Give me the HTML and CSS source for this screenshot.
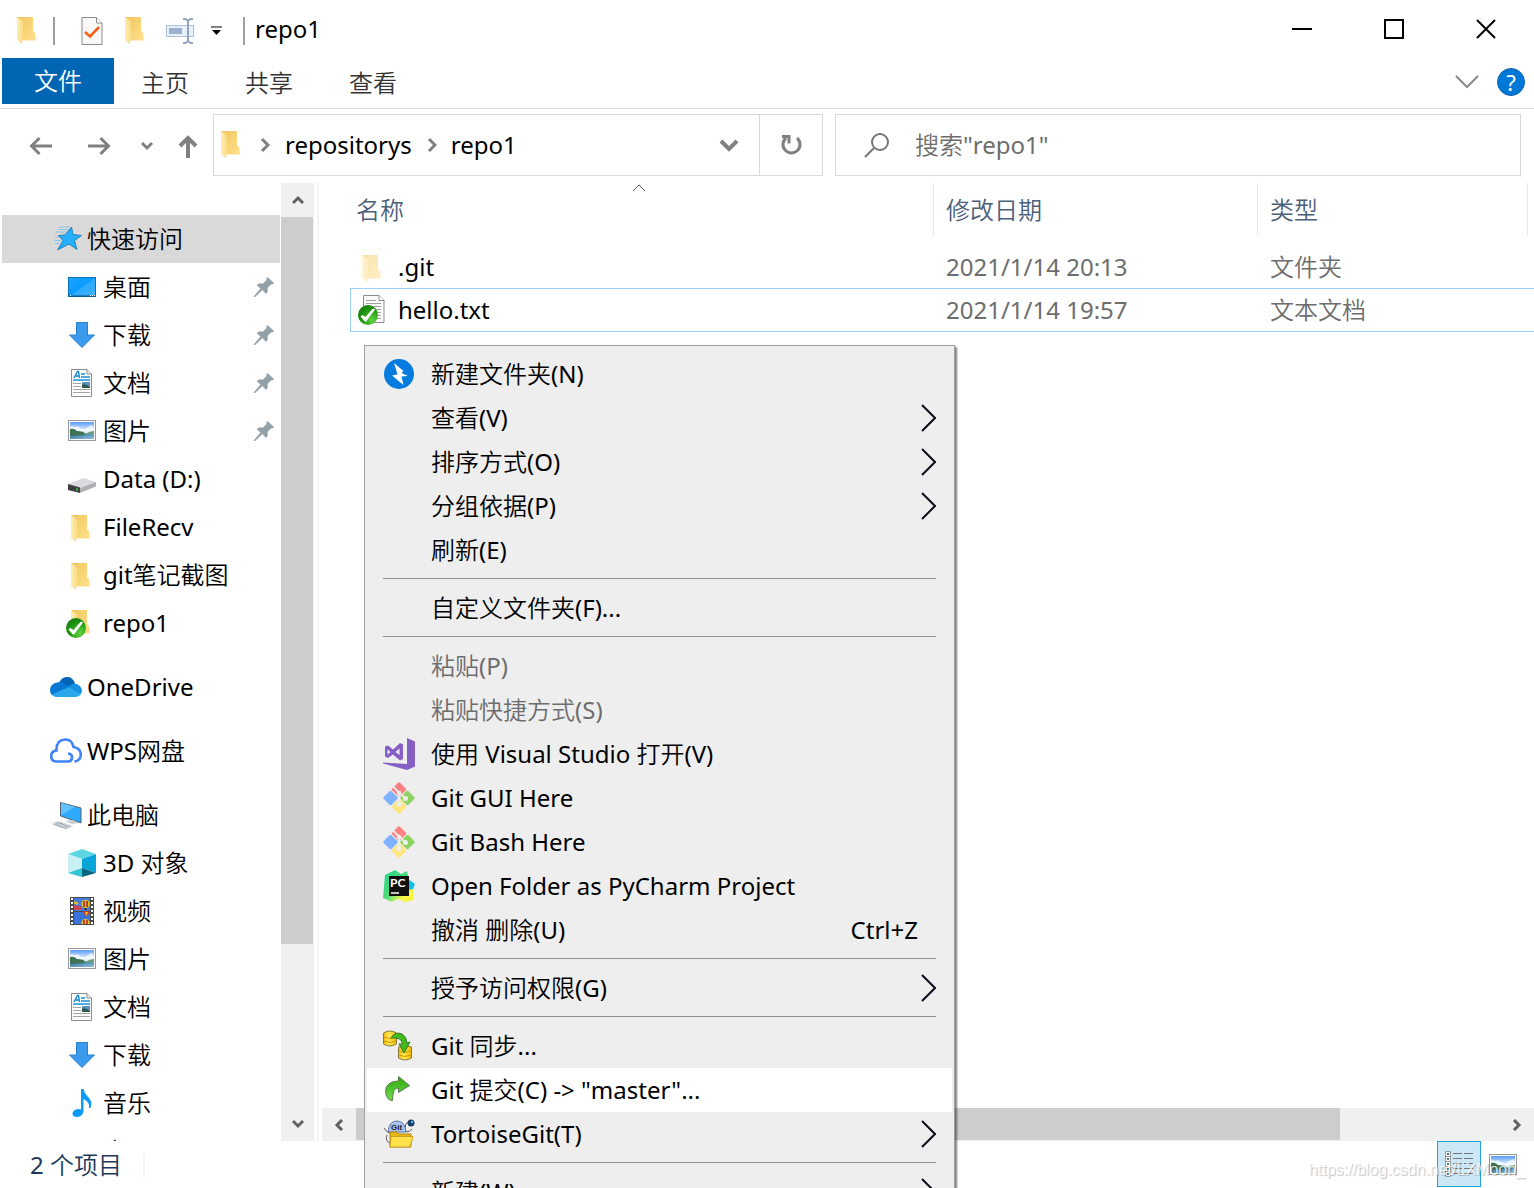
FILE: index.html
```html
<!DOCTYPE html>
<html lang="zh-CN">
<head>
<meta charset="utf-8">
<title>repo1</title>
<link rel="stylesheet" href="styles.css">
</head>
<body>
<svg class="sprite" aria-hidden="true">
  <defs>
    <linearGradient id="g-back" x1="0" x2="1" y1="0" y2="1"><stop offset="0" stop-color="#efc75c"/><stop offset="1" stop-color="#ffe08c"/></linearGradient>
    <linearGradient id="g-flap" x1="0" x2="1"><stop offset="0" stop-color="#ffedb0"/><stop offset="1" stop-color="#fbdb84"/></linearGradient>
    <linearGradient id="g-sky" x1="0" x2="0" y1="0" y2="1"><stop offset="0" stop-color="#5b9bf5"/><stop offset=".5" stop-color="#e4f3fb"/><stop offset="1" stop-color="#bfe0ee"/></linearGradient>
    <linearGradient id="g-sea" x1="0" x2="1" y1="0" y2="1"><stop offset="0" stop-color="#2c6a8f"/><stop offset="1" stop-color="#8fc4dd"/></linearGradient>
    <linearGradient id="g-desk" x1="0" x2="1" y1="0" y2="1"><stop offset="0" stop-color="#1ba4ff"/><stop offset=".5" stop-color="#0a9bff"/><stop offset=".51" stop-color="#2aa9ff"/><stop offset="1" stop-color="#42b5ff"/></linearGradient>
    <linearGradient id="g-green" x1="0" x2="0" y1="0" y2="1"><stop offset="0" stop-color="#2fa80f"/><stop offset="1" stop-color="#6fdc4a"/></linearGradient>
    <radialGradient id="g-ok" cx=".7" cy=".75" r=".9"><stop offset="0" stop-color="#5fd43a"/><stop offset=".6" stop-color="#1f9413"/><stop offset="1" stop-color="#157a0c"/></radialGradient>
    <linearGradient id="g-yel" x1="0" x2="1"><stop offset="0" stop-color="#f2b90a"/><stop offset=".4" stop-color="#ffe95a"/><stop offset="1" stop-color="#efb800"/></linearGradient>
    <linearGradient id="g-pyc" x1="0" x2="1" y1="0" y2="1"><stop offset="0" stop-color="#21d789"/><stop offset=".5" stop-color="#4fdc7c"/><stop offset=".75" stop-color="#fcf84a"/><stop offset="1" stop-color="#f4f032"/></linearGradient>
  </defs>
  <symbol id="folder" viewBox="0 0 19 28">
    <path d="M0 0H16V14L18 16L19 23.500H5Z" fill="url(#g-back)"/>
    <path d="M0 0L6 4.500V22L5 23.500V27.500L0 23Z" fill="url(#g-flap)"/>
  </symbol>
  <symbol id="ok" viewBox="0 0 20 20">
    <circle cx="10" cy="10" r="10" fill="url(#g-ok)"/>
    <path d="M3 11.500L7.500 16.500L16.500 4.500L15 4L7.500 12.500L4.500 10.500Z" fill="#fff" stroke="#fff"/>
  </symbol>
  <symbol id="folder-ok" viewBox="0 0 32 32">
    <use href="#folder" x="5" y="3" width="19" height="28"/><use href="#ok" x="0" y="11" width="20" height="20"/>
  </symbol>
  <symbol id="text-ok" viewBox="0 0 32 32">
    <path d="M6.500 1.500H22L27 6.500V28.500H6.500Z" fill="#fafafa" stroke="#8d8d8d"/><path d="M22 1.500V6.500H27" fill="#fff" stroke="#8d8d8d"/>
    <path d="M9 6.500H19M9 9.500H24M9 12.500H24M9 15.500H24M9 18.500H24M9 21.500H24M9 24.500H24" stroke="#a2a2a2" fill="none"/>
    <use href="#ok" x="1" y="11" width="20" height="20"/>
  </symbol>
  <symbol id="star" viewBox="0 0 32 32">
    <path d="M9 4H20M8 6.500H18M6 9H16M5 14H12M4 17.500H11M5 20.500H9" stroke="#8ac4e8" fill="none"/>
    <path d="M21.500 4L23 11.500L31.500 12.500L24.500 17.500L27 26.500L19 21L7.500 27L13 17.500L8.500 12.500L15 12Z" fill="#27aefc" stroke="#2183bd"/>
  </symbol>
  <symbol id="desktop" viewBox="0 0 32 32">
    <rect x="2.500" y="6.500" width="27" height="19" fill="url(#g-desk)" stroke="#0a6fb5"/><path d="M3 25H29" stroke="#06517f"/><path d="M24 24.500h5M4 24.500h1" stroke="#fff" stroke-dasharray="1 1"/>
  </symbol>
  <symbol id="down" viewBox="0 0 32 32"><path d="M10.500 3.500H21.500V16H28.500L16 28.500L3.500 16H10.500Z" fill="#3b9aec" stroke="#2a7fcb"/></symbol>
  <symbol id="doc" viewBox="0 0 32 32">
    <path d="M5.500 2.500H21L25.500 7V29.500H5.500Z" fill="#fff" stroke="#8d8d8d"/><path d="M21 2.500V7H25.500" fill="#eee" stroke="#8d8d8d"/>
    <path d="M8 11L11.500 4.500H12.500L13.500 11M9.500 9H13" stroke="#1787d0" fill="none" stroke-width="1.400"/><path d="M15 7H19M15 10H24M7 13H24" stroke="#1b8fd8" stroke-width="1.300"/>
    <path d="M7 16.500H15M7 19.500H15M7 22.500H24M7 25.500H24" stroke="#a3a3a3"/>
    <rect x="16" y="15" width="8" height="6" fill="#5f90b5"/><path d="M16 18Q19 16 24 20V21H16Z" fill="#2c5a50"/>
  </symbol>
  <symbol id="picture" viewBox="0 0 28 21">
    <rect x=".5" y=".5" width="27" height="20" fill="#fff" stroke="#999"/><rect x="2" y="2" width="24" height="17" fill="url(#g-sky)"/>
    <path d="M2 7Q3 5 6 7Q9 5 12 8T20 7T26 8V11H2Z" fill="#fff" opacity=".7"/>
    <path d="M2 14H26V19H2Z" fill="url(#g-sea)"/><path d="M2 9Q6 8 9 11Q15 11 18 14Q12 16 2 15.500Z" fill="#3f7250"/><path d="M17 14Q22 11 26 11V14Z" fill="#719b7d"/>
  </symbol>
  <symbol id="picture-row" viewBox="0 0 32 32"><use href="#picture" x="2" y="5" width="28" height="21"/></symbol>
  <symbol id="drive" viewBox="0 0 32 32">
    <path d="M2 21L18 15L30 19L14 25Z" fill="#d9dadd"/><path d="M14 25L30 19V23.500L14 30Z" fill="#aeb0b4"/><path d="M2 21L14 24.500V30L2 27Z" fill="#3e3f41"/><path d="M11 25.500V27.500" stroke="#38c838" stroke-width="2"/>
  </symbol>
  <symbol id="folder-row" viewBox="0 0 32 32"><use href="#folder" x="5" y="4" width="19" height="28"/></symbol>
  <symbol id="onedrive" viewBox="0 0 32 32">
    <path d="M9 12Q12 5 18 6Q23 6.500 25 12.500L18 17Z" fill="#0364b8"/><path d="M6.500 25.500Q0 25 0 19Q0 13 7 11.500Q11 10 15 13L22 18L8 25.500Z" fill="#0878d4"/>
    <path d="M18 16Q22 11 26.500 13Q32 15 32 20.500L30 24L18 17Z" fill="#1490df"/><path d="M2 23.500L19 16L31 23Q29 26 26 26H7Q4 26 2 23.500Z" fill="#28a8ea"/>
  </symbol>
  <symbol id="wps" viewBox="0 0 32 32">
    <path d="M18 18.500Q22.500 19 22 23Q21.500 26.500 18 26.500H6Q1 26 1.200 20.500Q1.500 16 6.500 15.500Q6 5 15 4.500Q22 4.200 23.500 12Q31 13.500 30.800 20Q30.500 25.500 24.500 26.500" fill="none" stroke="#3f83f8" stroke-width="2.600"/>
  </symbol>
  <symbol id="pc" viewBox="0 0 32 32">
    <path d="M10.500 3.500L31 9V24L10.500 17Z" fill="#2eaaff" stroke="#55636e"/><path d="M11 4L25 8L11 16Z" fill="#62c3ff"/>
    <path d="M15 22L23 21L29 24L22 25Z" fill="#c7cdd1"/><path d="M1 25L8 22L24 27L16 30.500Z" fill="#d9dde0"/><path d="M4 25.500L17 29.500M7 23.500L20 28M5 23.500L12 28.500M10 23L17 28" stroke="#a5abb0"/>
  </symbol>
  <symbol id="cube" viewBox="0 0 32 32">
    <path d="M16 2L30 7L16 12L2 7Z" fill="#5fd6e3"/><path d="M2 7L16 12V21L2 26Z" fill="#c9f0f2"/><path d="M30 7L16 12V21L30 26Z" fill="#0aa5d8"/><path d="M2 26L16 21V30Z" fill="#33c4d6"/><path d="M30 26L16 21V30Z" fill="#08647f"/>
  </symbol>
  <symbol id="video" viewBox="0 0 32 32">
    <rect x="4" y="2" width="24" height="28" fill="#4b4b4b"/><path d="M6 3V30M26 3V30" stroke="#fff" stroke-width="2" stroke-dasharray="2 2"/>
    <rect x="8" y="3" width="16" height="13" fill="#4a7cd8"/><rect x="8" y="17" width="16" height="12" fill="#3b73dc"/>
    <path d="M8 10L12 11L16 12V15H8Z" fill="#c64a4d"/><path d="M8 7L12 9" stroke="#f3c716" stroke-width="2"/><circle cx="19.500" cy="9" r="4" fill="#f3c716"/><path d="M18 6V12M21 6V12" stroke="#8b1f25" stroke-width="1.500"/><path d="M18.500 13H20.500V15H18.500Z" fill="#301818"/>
    <path d="M16.500 17Q20 15.500 24 17L20.500 21.500Z" fill="#d93a25"/><path d="M19 17L20.500 21L22 17Z" fill="#f0c42a"/><path d="M15 29Q16 24 19.500 24T24 29Z" fill="#f3c716"/><path d="M18 25V29M21 25V29" stroke="#b92026" stroke-width="1.500"/>
  </symbol>
  <symbol id="music" viewBox="0 0 32 32"><path d="M15 2H17.500Q18 6 22 10Q27 14 24.500 21H23Q24 15 17.500 12V24Q17 29.500 11 30Q6.500 30 6.500 26.500Q7 22.500 12 22L15 22.500Z" fill="#0a9bfa"/></symbol>
  <symbol id="pin" viewBox="0 0 20 20"><path d="M13.500 0L20 6L18.500 7.500H17L13.500 11Q14.500 14.500 12 17L8.500 13L1 20H0V19L6.500 11.500L2.500 8Q5 5.500 9 6.500L12.500 3V1Z" fill="#95a1a8"/></symbol>
  <symbol id="go" viewBox="0 0 16 28"><path d="M2 1L15 14L2 27" fill="none" stroke="#0b0b18" stroke-width="2"/></symbol>
  <symbol id="bolt" viewBox="0 0 32 32"><circle cx="16" cy="16" r="15" fill="#047bde"/><path d="M11 5L20.500 13L18.500 15L25 18L18.500 18.500L20.500 27L9 17.500L14.500 16.500Z" fill="#fff"/></symbol>
  <symbol id="vs" viewBox="0 0 32 32"><path d="M24 0L32 3.500V28.500L24 32L0 25.500V24.500L24 26Z" fill="#865fc5"/><path fill-rule="evenodd" fill="#865fc5" d="M2 8.500L5 7.500L10 11.500L17 5L20 6.500V21L17 22.500L10 16.500L5 20L2 18.500ZM4.500 11.500V16.500L7.500 14ZM16.500 10.500V17L12.500 14Z"/></symbol>
  <symbol id="git" viewBox="0 0 32 32">
    <g transform="rotate(45 16 16)"><rect x="4.500" y="4.500" width="11" height="11" rx="1.500" fill="#ff8080"/><rect x="16.500" y="4.500" width="11" height="11" rx="1.500" fill="#8dd35f"/><rect x="4.500" y="16.500" width="11" height="11" rx="1.500" fill="#80b3ff"/><rect x="16.500" y="16.500" width="11" height="11" rx="1.500" fill="#ffe680"/></g>
    <path d="M10.500 5L16 10.500V22M16 10.500L22 16" fill="none" stroke="#eee" stroke-width="1.800"/><circle cx="16" cy="11" r="2.300" fill="#eee"/><circle cx="22.500" cy="16.500" r="2.500" fill="#eee"/><circle cx="16" cy="22.500" r="2.500" fill="#eee"/>
  </symbol>
  <symbol id="sync" viewBox="0 0 32 32">
    <path d="M.5 3Q7 -1 13.500 3V14Q7 18 .5 14Z" fill="url(#g-yel)" stroke="#8a7a3c"/><path d="M15.500 17Q22 14 28.500 17V28Q22 32 15.500 28Z" fill="url(#g-yel)" stroke="#8a7a3c"/><path d="M1 7Q7 10 13 7M1 11Q7 14 13 11M16 21Q22 24 28 21M16 25Q22 28 28 25" fill="none" stroke="#d49a00"/>
    <path d="M8 8Q12 1 19 4Q24 7 23.500 13L27 12L21 23L16 14L19.500 14Q19 7 8 8Z" fill="#44bb1c" stroke="#317c24"/>
  </symbol>
  <symbol id="commit" viewBox="0 0 32 32"><path d="M15.500 2.500L26.500 11.500L15.500 18.500V14Q9.500 13 9.500 26.500L6.500 26Q1.500 22 3 14Q6 7 15.500 7Z" fill="url(#g-green)" stroke="#5b7c50"/></symbol>
  <symbol id="sheet-check" viewBox="0 0 21 28"><path d="M.5 .5H15L20.500 6V27.500H.5Z" fill="#f8f8f8" stroke="#8b8b8b"/><path d="M15 .5V6H20.500" fill="#fff" stroke="#8b8b8b"/><path d="M3.500 15L8.500 19.500L17.500 10" fill="none" stroke="#f4611a" stroke-width="2.600"/></symbol>
  <symbol id="rename" viewBox="0 0 28 26"><rect x=".5" y="7.500" width="27" height="11" fill="#e6f0fb" stroke="#adbfd9"/><rect x="3" y="10" width="13" height="6" fill="#9cb0cf"/><path d="M17 1H19.500L22 3L24.500 1H27M17 25H19.500L22 23L24.500 25H27M22 3V23" fill="none" stroke="#93a5c4" stroke-width="2"/></symbol>
  <symbol id="view-list" viewBox="0 0 28 26"><path d="M.5 .5H5.500V25.500H.5ZM1 5.500H5M1 10.500H5M1 15.500H5M1 20.500H5" fill="#fff" stroke="#999"/><path d="M3 2V24" stroke="#447788" stroke-width="2" stroke-dasharray="2 3"/><path d="M8 2.500H17M19 2.500H28M8 7.500H17M19 7.500H28M8 12.500H17M19 12.500H28M8 17.500H17M19 17.500H28M8 22.500H17M19 22.500H28" stroke="#777"/></symbol>
</svg>

<header class="titlebar">
  <div class="quick-bar">
    <svg class="folder-icon"><use href="#folder"/></svg>
    <span class="bar"></span>
    <button class="quick" aria-label="属性"><svg width="22" height="28"><use href="#sheet-check"/></svg></button>
    <button class="quick" aria-label="新建文件夹"><svg class="folder-icon"><use href="#folder"/></svg></button>
    <button class="quick" aria-label="重命名"><svg width="28" height="26"><use href="#rename"/></svg></button>
    <button class="quick more" aria-label="自定义快速访问工具栏"><svg width="11" height="10" viewBox="0 0 11 10"><path d="M0 1H11" stroke="#000" stroke-width="1"/><path d="M1 4H10L5.500 9Z"/></svg></button>
    <span class="bar"></span>
  </div>
  <h1 class="title">repo1</h1>
  <div class="window-buttons">
    <button aria-label="最小化"><svg width="20" height="20" viewBox="0 0 20 20"><path d="M0 10H20" stroke="#000" stroke-width="2"/></svg></button>
    <button aria-label="最大化"><svg width="20" height="20" viewBox="0 0 20 20"><path d="M1 1H19V19H1Z" fill="none" stroke="#000" stroke-width="2"/></svg></button>
    <button aria-label="关闭"><svg width="20" height="20" viewBox="0 0 20 20"><path d="M1 1L19 19M19 1L1 19" stroke="#000" stroke-width="2"/></svg></button>
  </div>
</header>

<nav class="ribbon">
  <button class="tab file">文件</button>
  <button class="tab">主页</button>
  <button class="tab">共享</button>
  <button class="tab">查看</button>
  <div class="ribbon-end">
    <button aria-label="展开功能区"><svg width="24" height="14" viewBox="0 0 24 14"><path d="M1 1L12 12L23 1" fill="none" stroke="#8a8a8a" stroke-width="2"/></svg></button>
    <button class="help" aria-label="帮助">?</button>
  </div>
</nav>

<div class="address-row">
  <div class="nav-buttons">
    <button aria-label="后退"><svg width="24" height="20" viewBox="0 0 24 20"><path d="M23 10H3M10.500 2L2.500 10L10.500 18" fill="none" stroke="#808080" stroke-width="3"/></svg></button>
    <button aria-label="前进"><svg width="24" height="20" viewBox="0 0 24 20"><path d="M1 10H21M13.500 2L21.500 10L13.500 18" fill="none" stroke="#808080" stroke-width="3"/></svg></button>
    <button class="slim" aria-label="最近位置"><svg width="14" height="10" viewBox="0 0 14 10"><path d="M2 2L7 7L12 2" fill="none" stroke="#808080" stroke-width="3"/></svg></button>
    <button class="up" aria-label="上移"><svg width="20" height="24" viewBox="0 0 20 24"><path d="M10 24V4M2 12L10 4L18 12" fill="none" stroke="#808080" stroke-width="4"/></svg></button>
  </div>
  <div class="address">
    <svg class="folder-icon"><use href="#folder"/></svg>
    <svg class="crumb-arrow" viewBox="0 0 10 16"><path d="M2 2L8 8L2 14" fill="none" stroke="#808080" stroke-width="3"/></svg>
    <a href="#repositorys">repositorys</a>
    <svg class="crumb-arrow" viewBox="0 0 10 16"><path d="M2 2L8 8L2 14" fill="none" stroke="#808080" stroke-width="3"/></svg>
    <a href="#repo1">repo1</a>
    <button class="drop" aria-label="以前的位置"><svg width="20" height="14" viewBox="0 0 20 14"><path d="M2 3L10 11L18 3" fill="none" stroke="#808080" stroke-width="4"/></svg></button>
    <button class="refresh" aria-label="刷新"><svg width="22" height="22" viewBox="0 0 22 22"><path d="M17 4A8.500 8.500 0 1 1 6 4" fill="none" stroke="#808080" stroke-width="3"/><path d="M2 2.500H9V9.500" fill="none" stroke="#808080" stroke-width="3"/></svg></button>
  </div>
  <label class="search">
    <svg width="25" height="25" viewBox="0 0 25 25"><circle cx="16" cy="9" r="8" fill="none" stroke="#767676" stroke-width="2"/><path d="M10.500 14.500L1 24" stroke="#767676" stroke-width="2"/></svg>
    <input type="text" placeholder='搜索"repo1"' aria-label="搜索">
  </label>
</div>

<main class="panes">
  <nav class="tree">
    <a class="root selected" href="#"><svg><use href="#star"/></svg>快速访问</a>
    <a href="#"><svg><use href="#desktop"/></svg>桌面<svg class="pin"><use href="#pin"/></svg></a>
    <a href="#"><svg><use href="#down"/></svg>下载<svg class="pin"><use href="#pin"/></svg></a>
    <a href="#"><svg><use href="#doc"/></svg>文档<svg class="pin"><use href="#pin"/></svg></a>
    <a href="#"><svg><use href="#picture-row"/></svg>图片<svg class="pin"><use href="#pin"/></svg></a>
    <a href="#"><svg><use href="#drive"/></svg>Data (D:)</a>
    <a href="#"><svg><use href="#folder-row"/></svg>FileRecv</a>
    <a href="#"><svg><use href="#folder-row"/></svg>git笔记截图</a>
    <a href="#"><svg><use href="#folder-ok"/></svg>repo1</a>
    <a class="root" href="#"><svg><use href="#onedrive"/></svg>OneDrive</a>
    <a class="root" href="#"><svg><use href="#wps"/></svg>WPS网盘</a>
    <a class="root" href="#"><svg><use href="#pc"/></svg>此电脑</a>
    <a href="#"><svg><use href="#cube"/></svg>3D 对象</a>
    <a href="#"><svg><use href="#video"/></svg>视频</a>
    <a href="#"><svg><use href="#picture-row"/></svg>图片</a>
    <a href="#"><svg><use href="#doc"/></svg>文档</a>
    <a href="#"><svg><use href="#down"/></svg>下载</a>
    <a href="#"><svg><use href="#music"/></svg>音乐</a>
    <a href="#"><svg><use href="#desktop"/></svg>桌面</a>
  </nav>
  <div class="scroll vertical">
    <button aria-label="向上滚动"><svg width="12" height="10" viewBox="0 0 12 10"><path d="M1 8L6 3L11 8" fill="none" stroke="#606060" stroke-width="3"/></svg></button>
    <span class="thumb"></span><span class="track"></span>
    <button aria-label="向下滚动"><svg width="12" height="10" viewBox="0 0 12 10"><path d="M1 2L6 7L11 2" fill="none" stroke="#606060" stroke-width="3"/></svg></button>
  </div>
  <section class="files">
    <table class="list">
      <colgroup><col class="c-name"><col class="c-date"><col class="c-type"><col></colgroup>
      <thead><tr><th>名称<svg class="sort" viewBox="0 0 14 8"><path d="M1 7L7 1L13 7" fill="none" stroke="#555"/></svg></th><th>修改日期</th><th>类型</th><th></th></tr></thead>
      <tbody>
        <tr><td><span class="cell"><svg class="hidden-item"><use href="#folder-row"/></svg>.git</span></td><td>2021/1/14 20:13</td><td>文件夹</td><td></td></tr>
        <tr class="focus"><td><span class="cell"><svg><use href="#text-ok"/></svg>hello.txt</span></td><td>2021/1/14 19:57</td><td>文本文档</td><td></td></tr>
      </tbody>
    </table>
    <div class="scroll horizontal">
      <button aria-label="向左滚动"><svg width="10" height="12" viewBox="0 0 10 12"><path d="M8 1L3 6L8 11" fill="none" stroke="#606060" stroke-width="3"/></svg></button>
      <span class="thumb"></span><span class="track"></span>
      <button aria-label="向右滚动"><svg width="10" height="12" viewBox="0 0 10 12"><path d="M2 1L7 6L2 11" fill="none" stroke="#606060" stroke-width="3"/></svg></button>
    </div>
  </section>
</main>

<footer class="status">
  <span class="count">2 个项目</span>
  <div class="views">
    <button class="on" aria-label="详细信息"><svg width="28" height="26"><use href="#view-list"/></svg></button>
    <button aria-label="大图标"><svg width="28" height="21"><use href="#picture"/></svg></button>
  </div>
  <span class="watermark">https://blog.csdn.net/LXMoon_</span>
</footer>

<div class="menu" role="menu">
  <button><svg><use href="#bolt"/></svg>新建文件夹(N)</button>
  <button><svg></svg>查看(V)<svg class="go"><use href="#go"/></svg></button>
  <button><svg></svg>排序方式(O)<svg class="go"><use href="#go"/></svg></button>
  <button><svg></svg>分组依据(P)<svg class="go"><use href="#go"/></svg></button>
  <button><svg></svg>刷新(E)</button>
  <hr>
  <button><svg></svg>自定义文件夹(F)...</button>
  <hr>
  <button disabled><svg></svg>粘贴(P)</button>
  <button disabled><svg></svg>粘贴快捷方式(S)</button>
  <button><svg><use href="#vs"/></svg>使用 Visual Studio 打开(V)</button>
  <button><svg><use href="#git"/></svg>Git GUI Here</button>
  <button><svg><use href="#git"/></svg>Git Bash Here</button>
  <button>
    <svg viewBox="0 0 32 32">
      <path d="M2 5L12 0L18 4L24 1L26 10L31 17L30 30L22 32L15 29L9 32L0 28Z" fill="url(#g-pyc)"/><path d="M25 9L32 14L30 19L25 20Z" fill="#12bfe8"/>
      <rect x="6" y="6" width="20" height="20" fill="#111"/><text x="7" y="17" class="glyph-pc">PC</text><path d="M8 23H16" stroke="#fff" stroke-width="1.500"/>
    </svg>Open Folder as PyCharm Project</button>
  <button><svg></svg>撤消 删除(U)<kbd>Ctrl+Z</kbd></button>
  <hr>
  <button><svg></svg>授予访问权限(G)<svg class="go"><use href="#go"/></svg></button>
  <hr>
  <button><svg><use href="#sync"/></svg>Git 同步...</button>
  <button class="hover"><svg><use href="#commit"/></svg>Git 提交(C) -&gt; "master"...</button>
  <button>
    <svg viewBox="0 0 32 32">
      <path d="M1 10Q4 15 7 15M4 17Q2 23 7 25M27 3Q20 6 23 13M29 11Q27 14 23 14" stroke="#555" fill="#fff"/><circle cx="28" cy="5" r="3.500" fill="#173f68"/><circle cx="29" cy="4" r="1.200" fill="#59b7ec"/>
      <path d="M5 14Q6 3 14 3T23 14Z" fill="#a9c3f5" stroke="#6376a8"/><text x="8" y="12" class="glyph-git">Git</text>
      <path d="M7 14H14L16 16H28V29H7Z" fill="#e9b510" stroke="#b58a10"/><path d="M8 18.500H30L27 29H7Z" fill="#ffe24a" stroke="#c9a022"/>
    </svg>TortoiseGit(T)<svg class="go"><use href="#go"/></svg></button>
  <hr>
  <button><svg></svg>新建(W)<svg class="go"><use href="#go"/></svg></button>
</div>
</body>
</html>
```
FILE: styles.css
```css
* { box-sizing: border-box; }
html, body { height: 100%; margin: 0; }
body {
  position: relative;
  display: flex;
  flex-direction: column;
  overflow: hidden;
  background: #fff;
  color: #000;
  font: 24px/32px "Noto Sans", "Noto Sans CJK SC DemiLight", "Noto Sans CJK SC", sans-serif;
}
button {
  display: flex;
  align-items: center;
  justify-content: center;
  padding: 0;
  border: 0;
  background: none;
  color: inherit;
  font: inherit;
}
a { color: inherit; text-decoration: none; }
svg { flex: none; }
.sprite { position: absolute; width: 0; height: 0; }
.folder-icon { width: 19px; height: 28px; }
.glyph-pc { font: bold 12px "Lato", sans-serif; fill: #fff; }
.glyph-git { font: bold 8px "Liberation Sans", sans-serif; fill: #222; }

/* title bar */
.titlebar { display: flex; align-items: center; flex: none; height: 58px; padding: 0 2px 0 17px; }
.quick-bar { display: flex; align-items: center; padding-top: 4px; }
.bar { width: 2px; height: 28px; margin-left: 17px; background: #a0a0a0; }
.bar + .quick { margin-left: 26px; }
.quick { margin-left: 22px; }
.quick.more { margin-left: 17px; }
.quick.more + .bar { margin-left: 21px; }
.title { margin: 0 0 0 10px; font-size: 24px; font-weight: 400; line-height: 32px; }
.window-buttons { display: flex; align-self: stretch; margin-left: auto; }
.window-buttons button { width: 92px; }

/* ribbon */
.ribbon { display: flex; flex: none; height: 51px; padding: 0 9px 4px 2px; border-bottom: 1px solid #dadbdc; }
.tab { width: 104px; padding: 4px 2px 0 0; color: #333; }
.tab.file { width: 112px; padding: 0; background: #0066b4; color: #fff; }
.ribbon-end { display: flex; align-items: center; gap: 18px; margin-left: auto; padding-top: 2px; }
.help { width: 28px; height: 28px; border: 1px solid #0b62ab; border-radius: 50%; background: #0078d7; color: #fff; font-size: 22px; line-height: 26px; }

/* address row */
.address-row { display: grid; flex: none; grid-template-columns: 213px minmax(0, 622fr) minmax(0, 686fr); padding: 5px 13px 7px 0; }
.nav-buttons { display: flex; padding: 2px 0 0 12px; }
.nav-buttons button { width: 58px; }
.nav-buttons .slim { width: 38px; }
.nav-buttons .up { width: 43px; }
.address { display: flex; align-items: center; height: 62px; margin-right: 12px; padding-left: 7px; border: 1px solid #d9d9d9; }
.crumb-arrow { width: 10px; height: 16px; margin: 0 15px 0 20px; }
.address a + .crumb-arrow { margin: 0 14px 0 15px; }
.drop { width: 60px; height: 60px; margin-left: auto; }
.refresh { width: 63px; height: 60px; border-left: 1px solid #d9d9d9; }
.search { display: flex; align-items: center; gap: 26px; padding-left: 28px; border: 1px solid #d9d9d9; }
.search input { flex: 1; min-width: 0; padding: 0; border: 0; outline: 0; background: none; font: inherit; }
.search input::placeholder { color: #6d6d6d; opacity: 1; }

/* panes */
.panes { display: flex; flex: 1; min-height: 0; }
.tree { flex: none; width: 281px; padding: 32px 1px 0 2px; overflow: hidden; }
.tree a { display: flex; align-items: center; gap: 5px; height: 48px; padding: 0 6px 0 64px; white-space: nowrap; }
.tree a.root { margin-top: 16px; padding-left: 48px; }
.tree a.selected { margin-top: 0; background: #d9d9d9; }
.tree svg { width: 32px; height: 32px; }
.tree .pin { width: 20px; height: 20px; margin-left: auto; }
.scroll { display: flex; flex: none; background: #f0f0f0; }
.scroll .thumb { background: #cdcdcd; }
.vertical { flex-direction: column; width: 33px; }
.vertical button { height: 34px; }
.vertical .thumb { flex: 727 1 0; margin-right: 1px; }
.vertical .track { flex: 163 1 0; }
.horizontal { height: 33px; margin-top: auto; }
.horizontal button { width: 34px; }
.horizontal .thumb { flex: 984 1 0; margin-bottom: 1px; }
.horizontal .track { flex: 160 1 0; }
.files { display: flex; flex: 1; flex-direction: column; min-width: 0; margin-left: 3px; padding-left: 3px; border-left: 2px solid #f5f5f5; overflow: hidden; }
.list { width: 100%; padding-left: 28px; border-spacing: 0; table-layout: fixed; color: #6d6d6d; }
.c-name { width: 584px; }
.c-date { width: 324px; }
.c-type { width: 270px; }
.list th { position: relative; height: 52px; padding: 1px 0 0 12px; border-right: 1px solid #e5e5e5; color: #4c607a; font-weight: 400; text-align: left; }
.list th:first-child { padding-left: 6px; }
.list th:last-child { border: 0; }
.sort { position: absolute; top: 1px; left: 50%; width: 14px; height: 8px; margin-left: -10px; }
.list tbody::before { content: ""; display: block; height: 11px; }
.list td { height: 42px; padding: 0 0 0 12px; border: 1px solid transparent; border-width: 1px 0; }
.list td:first-child { padding-left: 6px; border-left-width: 1px; color: #000; }
.list .focus td { height: 44px; border-color: #99d1ff; }
.cell { display: flex; align-items: center; gap: 9px; }
.cell svg { width: 32px; height: 32px; }
.hidden-item { opacity: .5; }

/* status bar */
.status { position: relative; display: flex; flex: none; height: 47px; padding-left: 30px; color: #1e395b; }
.count { align-self: center; padding-right: 21px; border-right: 2px solid #f3f3f3; line-height: 24px; }
.views { display: flex; margin: 0 9px 1px auto; }
.views button { width: 44px; }
.views .on { border: 1px solid #26a0da; background: #cce8f6; }
.watermark { position: absolute; right: 9px; bottom: 6px; color: rgba(255, 255, 255, .8); font: 16px/24px "Liberation Sans", sans-serif; text-shadow: 1px 1px 1px rgba(0, 0, 0, .25); }

/* context menu */
.menu { position: absolute; top: 345px; left: 364px; width: 591px; padding: 6px 2px; border: 1px solid #a0a0a0; background: #eee; box-shadow: 2px 2px 2px rgba(0, 0, 0, .5); }
.menu button { justify-content: flex-start; gap: 16px; width: 100%; height: 44px; padding: 0 16px; white-space: nowrap; }
.menu button:disabled { color: #6d6d6d; }
.menu .hover { background: #fff; }
.menu svg { width: 32px; height: 32px; }
.menu .go { width: 16px; height: 28px; margin-left: auto; }
.menu kbd { margin: 0 18px 0 auto; font: inherit; }
.menu hr { height: 1px; margin: 6px 16px 7px; border: 0; background: #919191; }
```
